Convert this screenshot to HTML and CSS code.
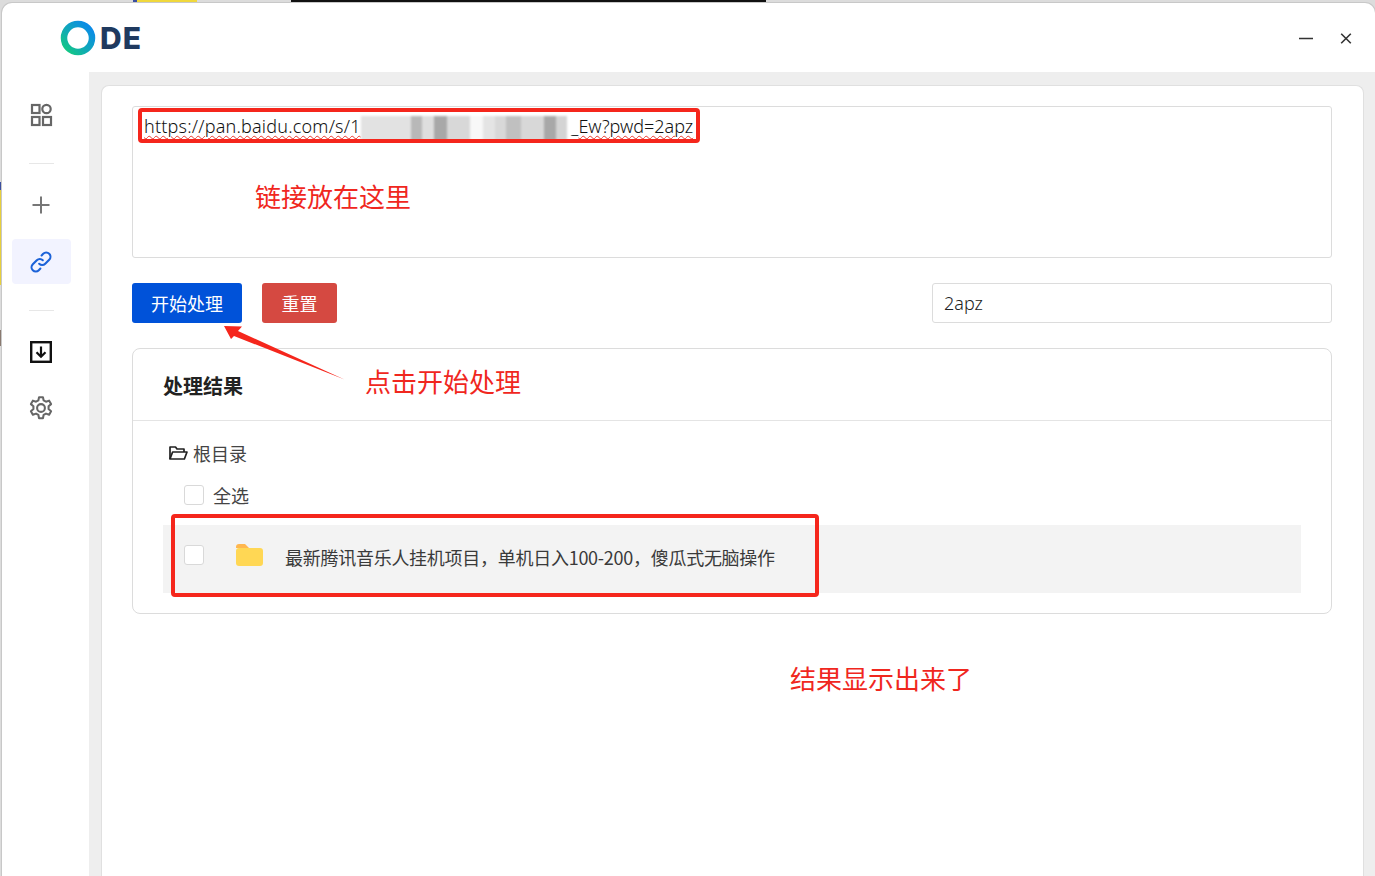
FILE: index.html
```html
<!DOCTYPE html>
<html lang="zh-CN">
<head>
<meta charset="utf-8">
<title>ODE</title>
<link rel="stylesheet" href="styles.css">
</head>
<body>
<div class="desktop">
  <div class="bit bit-blue"></div>
  <div class="bit bit-yellow"></div>
  <div class="bit bit-black"></div>
  <div class="bit bit-left-blue"></div>
  <div class="bit bit-left-yellow"></div>
  <div class="bit bit-left-dark"></div>

  <div class="window">
    <header class="titlebar">
      <div class="logo">
        <svg class="logo-ring" width="36" height="36" viewBox="0 0 36 36">
          <defs>
            <linearGradient id="ring" x1="0" y1="1" x2="1" y2="0">
              <stop offset="0" stop-color="#14cc7c"/>
              <stop offset="0.45" stop-color="#10a8b8"/>
              <stop offset="1" stop-color="#0a86f0"/>
            </linearGradient>
          </defs>
          <circle cx="18" cy="18" r="14" fill="none" stroke="url(#ring)" stroke-width="6.500"/>
        </svg>
        <span class="logo-text">DE</span>
      </div>
      <div class="win-controls">
        <svg width="16" height="16" viewBox="0 0 16 16"><path d="M1 8.500h14" stroke="#333" stroke-width="1.600" fill="none"/></svg>
        <svg width="16" height="16" viewBox="0 0 16 16"><path d="M3.200 3.700l9.600 9.600M12.800 3.700l-9.600 9.600" stroke="#333" stroke-width="1.600" fill="none"/></svg>
      </div>
    </header>

    <div class="content">
      <nav class="sidebar">
        <div class="nav-item">
          <svg width="24" height="24" viewBox="0 0 24 24" fill="none" stroke="#666" stroke-width="2.200"><rect x="3" y="2" width="7.500" height="8"/><circle cx="17.500" cy="6" r="4.200"/><rect x="3" y="14" width="7.500" height="8"/><rect x="14" y="14" width="8" height="8"/></svg>
        </div>
        <div class="nav-divider"></div>
        <div class="nav-item">
          <svg width="24" height="24" viewBox="0 0 24 24" fill="none" stroke="#777" stroke-width="2"><path d="M12 3.500v17M3.500 12h17"/></svg>
        </div>
        <div class="nav-item nav-active">
          <svg width="24" height="24" viewBox="0 0 24 24" fill="none" stroke="#1c62d8" stroke-width="2.100" stroke-linecap="round" stroke-linejoin="round"><path d="M10.200 13.800a4.200 4.200 0 0 0 6 0l4-4a4.240 4.240 0 0 0-6-6l-1.600 1.600"/><path d="M13.800 10.200a4.200 4.200 0 0 0-6 0l-4 4a4.240 4.240 0 0 0 6 6l1.600-1.600"/></svg>
        </div>
        <div class="nav-divider"></div>
        <div class="nav-item">
          <svg width="24" height="24" viewBox="0 0 24 24" fill="none" stroke="#111"><rect x="2.200" y="2.200" width="19.600" height="19.600" stroke-width="2.400"/><path d="M12 6.500v10M7.500 12.200l4.500 4.600 4.500-4.600" stroke-width="2.200"/></svg>
        </div>
        <div class="nav-item nav-last">
          <svg width="26" height="26" viewBox="0 0 24 24" fill="none" stroke="#666" stroke-width="1.900" stroke-linejoin="round"><circle cx="12" cy="12" r="3.600"/><path d="M10.200 2h3.600l.6 3 2.200 1.200 2.900-1 1.800 3.200-2.300 2v2.600l2.300 2-1.800 3.200-2.900-1-2.200 1.200-.6 3h-3.600l-.6-3-2.200-1.200-2.900 1-1.800-3.200 2.300-2v-2.600l-2.300-2 1.800-3.200 2.900 1 2.200-1.200z"/></svg>
        </div>
      </nav>

      <main class="main">
        <section class="panel">
          <div class="url-box">
            <div class="url-line"><span class="misspelt">https://pan.baidu.com/s/1</span><span class="blurred"></span><span>_</span><span class="misspelt url-tail">Ew?pwd=2apz</span></div>
          </div>

          <div class="actions">
            <button class="btn btn-primary">开始处理</button>
            <button class="btn btn-danger">重置</button>
            <div class="pwd-input">2apz</div>
          </div>

          <div class="card">
            <div class="card-head"><span class="card-title">处理结果</span></div>
            <div class="card-body">
              <div class="root-row">
                <svg width="20" height="16" viewBox="0 0 20 16" fill="none" stroke="#222" stroke-width="1.700" stroke-linejoin="round"><path d="M2 14V2h5.500l1.500 2h7v3"/><path d="M2 14l2.600-7H19l-2.600 7z"/></svg>
                <span>根目录</span>
              </div>
              <div class="select-row">
                <span class="check"></span>
                <span>全选</span>
              </div>
              <div class="file-row">
                <span class="check"></span>
                <svg class="folder" width="28" height="24" viewBox="0 0 28 24"><path d="M1 4a3 3 0 0 1 3-3h6l4 4H1z" fill="#ffb74f"/><rect x="1" y="5" width="27" height="18" rx="3" fill="#ffd754"/></svg>
                <span class="file-name">最新腾讯音乐人挂机项目，单机日入100-200，傻瓜式无脑操作</span>
              </div>
            </div>
          </div>
        </section>
      </main>
    </div>
  </div>

  <div class="mark mark-url"></div>
  <div class="mark mark-row"></div>
  <div class="note note-1">链接放在这里</div>
  <div class="note note-2">点击开始处理</div>
  <div class="note note-3">结果显示出来了</div>
  <svg class="arrow" width="125" height="60" viewBox="0 0 125 60"><polygon points="2,3 20,3.500 16,8 122.500,56.500 12,13 9,16" fill="#f5261c"/></svg>
</div>
</body>
</html>
```

FILE: styles.css
```css
* { box-sizing: border-box; }
html, body { margin: 0; padding: 0; height: 100%; overflow: hidden; }
body { font-family: "Noto Sans", "Noto Sans CJK SC", sans-serif; color: #333; background: #e6e6e6; }

.desktop { position: relative; width: 1375px; height: 876px; overflow: hidden; background: #dcdcdc; }
.bit { position: absolute; }
.bit-blue { left: 133px; top: 0; width: 4px; height: 3px; background: #3b4fa0; }
.bit-yellow { left: 137px; top: 0; width: 60px; height: 3px; background: #f0d83c; }
.bit-black { left: 291px; top: 0; width: 475px; height: 3px; background: #111; }
.bit-left-blue { left: 0; top: 182px; width: 2px; height: 8px; background: #3b4fa0; }
.bit-left-yellow { left: 0; top: 190px; width: 2px; height: 95px; background: #e6cf3c; }
.bit-left-dark { left: 0; top: 330px; width: 2px; height: 16px; background: #8a7a70; }

.window {
  position: absolute; left: 2px; top: 3px; width: 1373px; height: 873px;
  background: #fff; border-radius: 10px 10px 0 0;
  display: flex; flex-direction: column; overflow: hidden;
  box-shadow: 0 0 0 1px #c8c8c8;
}

.titlebar { height: 69px; flex: none; display: flex; align-items: center; justify-content: space-between; padding: 0 21px 0 58px; }
.logo { display: flex; align-items: center; gap: 4px; margin-top: 1px; }
.logo-ring { display: block; }
.logo-text { font-family: Inter, "Liberation Sans", sans-serif; font-weight: 800; font-size: 30px; line-height: 36px; color: #1f3a5f; letter-spacing: 1px; }
.win-controls { display: flex; align-items: center; gap: 24px; margin-top: 1px; }
.win-controls svg { display: block; }

.content { flex: 1; display: flex; min-height: 0; }

.sidebar { width: 87px; flex: none; padding: 20px 0 0 10px; display: flex; flex-direction: column; }
.nav-item { width: 59px; height: 45px; margin-bottom: 12px; padding-right: 1px; display: flex; align-items: center; justify-content: center; border-radius: 4px; }
.nav-item svg { display: block; }
.nav-active { background: #f2f3ff; margin-bottom: 0; }
.nav-last { margin-top: -1px; }
.nav-divider { width: 25px; height: 1px; margin: 14px 0 18px 17px; background: #e7e7e7; }
.nav-active + .nav-divider { margin-top: 26px; }

.main { flex: 1; min-width: 0; background: #eeeeee; padding: 13px 11px 0 12px; }
.panel {
  height: 100%; background: #fff; border: 1px solid #e0e0e0; border-bottom: 0;
  border-radius: 8px 8px 0 0; padding: 20px 31px 0 30px;
}

.url-box { height: 152px; border: 1px solid #dcdcdc; border-radius: 3px; padding: 5px 11px; background: #fff; }
.url-line { font-size: 18px; font-weight: 300; line-height: 28px; color: #111; white-space: nowrap; display: flex; font-family: "Noto Sans", sans-serif; letter-spacing: 0.2px; }
.url-tail { letter-spacing: 0; }
.misspelt { text-decoration: underline wavy #e8392e 1px; text-underline-offset: 2px; }
.blurred {
  display: block; width: 210px; height: 25px; margin-top: 4px; filter: blur(1px);
  background:
    linear-gradient(90deg, #e2e2e2 0 24%, #b8b8b8 24% 29%, #dedede 29% 35%, #a8a8a8 35% 41%, #d8d8d8 41% 52%, #f8f8f8 52% 58%, #e4e4e4 58% 64%, #d8d8d8 64% 69%, #c0c0c0 69% 76%, #d8d8d8 76% 87%, #a8a8a8 87% 93%, #d4d4d4 93% 98%, #fff 98% 100%);
}

.actions { display: flex; align-items: flex-start; margin-top: 25px; }
.btn { height: 40px; border: 0; border-radius: 3px; color: #fff; font-family: "Noto Sans CJK SC", sans-serif; font-size: 18px; padding: 0; }
.btn-primary { width: 110px; background: #0052d9; }
.btn-danger { width: 75px; margin-left: 20px; background: #d54941; }
.pwd-input { margin-left: auto; width: 400px; height: 40px; border: 1px solid #dcdcdc; border-radius: 3px; padding: 0 11px; font-size: 18px; font-weight: 300; line-height: 38px; color: #222; }

.card { margin-top: 25px; height: 266px; border: 1px solid #dcdcdc; border-radius: 8px; }
.card-head { height: 72px; padding-left: 30px; display: flex; align-items: center; font-family: "Noto Sans CJK SC", sans-serif; font-size: 20px; font-weight: 700; color: #222; border-bottom: 1px solid #e4e4e4; }
.card-title { margin-top: 2px; }
.card-body { padding: 19px 30px 0; font-family: "Noto Sans CJK SC", sans-serif; font-size: 18px; color: #444; }
.root-row { display: flex; align-items: center; gap: 5px; height: 26px; padding-left: 5px; }
.root-row svg { display: block; }
.select-row { display: flex; align-items: center; gap: 9px; height: 26px; margin-top: 16px; padding-left: 21px; }
.check { width: 20px; height: 20px; flex: none; background: #fff; border: 1px solid #d9d9d9; border-radius: 3px; }
.file-row { display: flex; align-items: center; height: 68px; margin-top: 17px; padding-left: 21px; background: #f3f3f3; }
.file-row .check { margin-top: -8px; }
.folder { display: block; margin-left: 31px; flex: none; margin-top: -8px; }
.file-name { margin-left: 22px; font-size: 18px; color: #3a3a3a; margin-top: -4px; letter-spacing: -0.27px; }

.mark { position: absolute; border: 4px solid #f5261c; border-radius: 4px; }
.mark-url { left: 138px; top: 108px; width: 562px; height: 35px; }
.mark-row { left: 171px; top: 514px; width: 648px; height: 83px; }

.note { position: absolute; font-family: "Noto Sans CJK SC", sans-serif; font-size: 26px; line-height: 36px; color: #f0271e; white-space: nowrap; }
.note-1 { left: 255px; top: 178px; }
.note-2 { left: 365px; top: 363px; }
.note-3 { left: 790px; top: 660px; }
.arrow { position: absolute; left: 222px; top: 323px; display: block; }
```
